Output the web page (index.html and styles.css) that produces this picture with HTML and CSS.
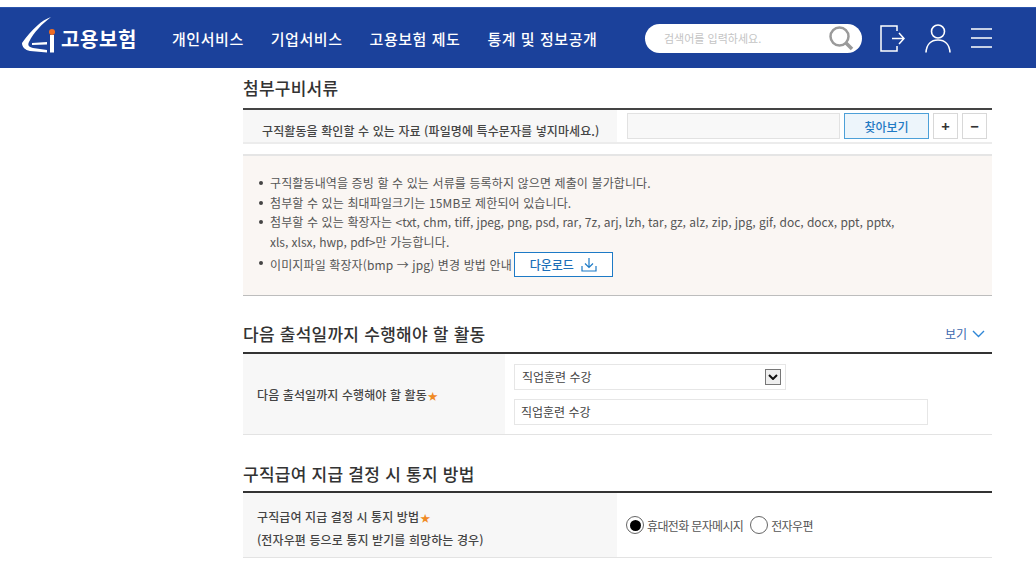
FILE: index.html
```html
<!DOCTYPE html>
<html lang="ko">
<head>
<meta charset="utf-8">
<title>고용보험</title>
<link rel="stylesheet" href="styles.css">
</head>
<body>
<header class="header">
  <a class="logo">
    <svg class="logo-mark" width="34" height="36" viewBox="0 0 34 36">
      <path d="M29 0C20 3 10 12 0 26C0 30 3 33 8 34L25 35.500V33L11 31C6.500 30 5.500 28 7 25C12 15 20 7 29 0Z" fill="#fff"/>
      <path d="M10 26L25 25V27.500L10 28Z" fill="#fff"/>
      <rect x="28" y="18" width="4" height="17.500" fill="#fff"/>
      <circle cx="30" cy="15" r="3" fill="#ee6c24"/>
    </svg>
    <span class="logo-text">고용보험</span>
  </a>
  <nav class="nav">
    <a>개인서비스</a>
    <a>기업서비스</a>
    <a>고용보험 제도</a>
    <a>통계 및 정보공개</a>
  </nav>
  <div class="search">
    <span class="search-hint">검색어를 입력하세요.</span>
    <svg width="28" height="28" viewBox="0 0 28 28" fill="none" stroke="#9a9a9a">
      <circle cx="12.500" cy="12.500" r="9" stroke-width="2.500"/>
      <path d="M19 19L25 25" stroke-width="3.500"/>
    </svg>
  </div>
  <div class="head-icons">
    <svg width="25" height="27" viewBox="0 0 25 27" fill="none" stroke="#fff" stroke-width="1.500">
      <path d="M17 6V1H1V26H17V21"/>
      <path d="M12 13.500H24M19 8L24 13.500L19 19"/>
    </svg>
    <svg width="26" height="29" viewBox="0 0 26 29" fill="none" stroke="#fff" stroke-width="1.600">
      <circle cx="13" cy="7.500" r="6.500"/>
      <path d="M1 28.500C1.500 20.500 6 16 13 16C20 16 24.500 20.500 25 28.500"/>
    </svg>
    <svg width="21" height="20" viewBox="0 0 21 20" fill="none" stroke="#fff" stroke-width="1.300">
      <path d="M0 1H21M0 10H21M0 19H21"/>
    </svg>
  </div>
</header>

<main class="main">
  <h2 class="sec-title first">첨부구비서류</h2>
  <div class="file-row">
    <div class="file-label">구직활동을 확인할 수 있는 자료 (파일명에 특수문자를 넣지마세요.)</div>
    <div class="file-controls">
      <div class="file-input"></div>
      <button class="btn-browse">찾아보기</button>
      <button class="btn-sq">+</button>
      <button class="btn-sq">−</button>
    </div>
  </div>
  <div class="notice">
    <ul>
      <li>구직활동내역을 증빙 할 수 있는 서류를 등록하지 않으면 제출이 불가합니다.</li>
      <li>첨부할 수 있는 최대파일크기는 15MB로 제한되어 있습니다.</li>
      <li>첨부할 수 있는 확장자는 <span class="ext">&lt;txt, chm, tiff, jpeg, png, psd, rar, 7z, arj, lzh, tar, gz, alz, zip, jpg, gif, doc, docx, ppt, pptx,</span><br><span class="ext">xls, xlsx, hwp, pdf&gt;</span>만 가능합니다.</li>
      <li class="dl-line"><span>이미지파일 확장자(bmp → jpg) 변경 방법 안내</span>
        <button class="btn-dl">다운로드
          <svg width="16" height="14" viewBox="0 0 16 14" fill="none" stroke="#1d7ac6" stroke-width="1.200">
            <path d="M8 0V9M4 5.500L8 9.500L12 5.500M1 8V13H15V8"/>
          </svg>
        </button>
      </li>
    </ul>
  </div>

  <div class="sec-head second">
    <h2 class="sec-title">다음 출석일까지 수행해야 할 활동</h2>
    <a class="more">보기
      <svg width="13" height="8" viewBox="0 0 13 8" fill="none" stroke="#2f86d6" stroke-width="1.400"><path d="M1 1L6.500 6.500L12 1"/></svg>
    </a>
  </div>
  <div class="row activity">
    <div class="label label-activity"><span>다음 출석일까지 수행해야 할 활동<i class="star">★</i></span></div>
    <div class="fields">
      <div class="select">직업훈련 수강
        <span class="select-btn"><svg width="10" height="6" viewBox="0 0 10 6" fill="none" stroke="#111" stroke-width="2"><path d="M1 1L5 5L9 1"/></svg></span>
      </div>
      <div class="text-input">직업훈련 수강</div>
    </div>
  </div>

  <div class="sec-head third">
    <h2 class="sec-title">구직급여 지급 결정 시 통지 방법</h2>
  </div>
  <div class="row method">
    <div class="label label-method">
      <div>구직급여 지급 결정 시 통지 방법<i class="star">★</i></div>
      <div>(전자우편 등으로 통지 받기를 희망하는 경우)</div>
    </div>
    <div class="radios">
      <span class="radio on"></span><span class="radio-text first-opt">휴대전화 문자메시지</span>
      <span class="radio"></span><span class="radio-text">전자우편</span>
    </div>
  </div>
</main>
</body>
</html>
```
FILE: styles.css
```css
* { box-sizing: border-box; }
html, body { margin: 0; padding: 0; }
body {
  background: #fff;
  font-family: "Noto Sans CJK KR", "Noto Sans", sans-serif;
  color: #444;
  overflow: hidden;
  height: 584px;
}
.header {
  margin-top: 7px;
  height: 61px;
  background: #1b419b;
  display: flex;
  align-items: center;
  color: #fff;
  border-top: 1px solid #2a55ad;
}
.logo { display: flex; align-items: center; margin-left: 22px; width: 150px; }
.logo-mark { margin-top: -6px; }
.logo-text { font-size: 20px; font-weight: 700; margin-left: 5px; letter-spacing: 0.600px; }
.nav { display: flex; gap: 27px; font-size: 15px; font-weight: 500; width: 473px; letter-spacing: 0.550px; }
.search {
  width: 217px;
  height: 29px;
  background: #fff;
  border-radius: 15px;
  display: flex;
  align-items: center;
  justify-content: space-between;
  padding: 0 7px 0 19px;
}
.search-hint { font-size: 11px; color: #c4c4c4; }
.head-icons { display: flex; align-items: center; gap: 20px; margin-left: 18px; }
.main { margin-left: 243px; width: 749px; }
.sec-title { margin: 0; font-size: 17px; font-weight: 500; color: #333; line-height: 24px; letter-spacing: 0.250px; }
.sec-title.first { padding-top: 8px; height: 40px; }
.file-row {
  display: flex;
  height: 36px;
  border-top: 2px solid #444;
  border-bottom: 2px solid #ececec;
  background: #fff;
}
.file-label {
  width: 374px;
  background: #f7f7f7;
  font-size: 12px;
  font-weight: 500;
  padding: 12px 0 0 19px;
  line-height: 18px;
  white-space: nowrap;
  letter-spacing: 0.100px;
}
.file-controls { display: flex; gap: 4px; padding: 3px 0 0 10px; align-items: flex-start; }
.file-input { width: 213px; height: 26px; background: #f8f8f8; border: 1px solid #e2e2e2; }
.btn-browse {
  width: 85px; height: 26px; padding: 0;
  background: #edf5fb; border: 1px solid #4da0d8; color: #1f7ac4;
  font: 500 12px "Noto Sans CJK KR", sans-serif;
}
.btn-sq {
  width: 25px; height: 26px; padding: 0;
  background: #fff; border: 1px solid #d8d8d8; color: #333;
  font: 700 15px "Noto Sans", sans-serif;
}
.notice {
  margin-top: 10px;
  height: 142px;
  background: #faf6f3;
  border-top: 2px solid #e5e5e5;
  border-bottom: 1px solid #bdbdbd;
  padding: 17px 0 0 16px;
  font-size: 12px;
  color: #555;
  letter-spacing: 0.120px;
}
.notice ul { margin: 0; padding: 0; list-style: none; }
.notice li { line-height: 19.670px; padding-left: 11px; position: relative; white-space: nowrap; }
.ext { letter-spacing: -0.020px; }
.notice li::before {
  content: "";
  position: absolute;
  left: 0; top: 8px;
  width: 4px; height: 4px;
  border-radius: 50%;
  background: #444;
}
.dl-line { display: flex; align-items: center; gap: 2px; height: 26px; }
.notice li.dl-line::before { top: 9px; }
.btn-dl {
  width: 99px; height: 25px; padding: 0;
  background: #fff; border: 1px solid #1d7ac6; color: #1d6fb8;
  font: 500 12px "Noto Sans CJK KR", sans-serif;
  display: flex; align-items: center; justify-content: center; gap: 7px;
}
.sec-head {
  display: flex;
  justify-content: space-between;
  align-items: flex-start;
  border-bottom: 2px solid #333;
}
.sec-head.second { margin-top: 26px; height: 32px; }
.sec-head.third { margin-top: 27px; height: 31px; }
.more {
  display: flex; align-items: center; gap: 5px;
  font-size: 12px; color: #3c68ad; margin: 3px 7px 0 0;
}
.row { display: flex; border-bottom: 1px solid #e3e3e3; }
.activity { height: 81px; }
.method { height: 65px; }
.label {
  background: #f7f7f7;
  font-size: 12px;
  font-weight: 500;
  color: #444;
  padding-left: 14px;
  letter-spacing: 0.100px;
}
.label-activity { width: 262px; display: flex; align-items: center; }
.label-method { width: 374px; padding-top: 13px; line-height: 22px; }
.star { font-style: normal; color: #f08a24; font-size: 10px; margin-left: 1px; }
.fields { padding: 10px 0 0 9px; display: flex; flex-direction: column; gap: 9px; }
.select {
  width: 272px; height: 26px;
  border: 1px solid #e6e6e6;
  font-size: 12px; line-height: 24px; padding-left: 7px;
  display: flex; justify-content: space-between; align-items: center;
  padding-right: 4px;
}
.select-btn {
  width: 16px; height: 16px;
  background: #eee; border: 1px solid #777;
  display: flex; align-items: center; justify-content: center;
}
.text-input {
  width: 414px; height: 26px;
  border: 1px solid #e6e6e6;
  font-size: 12px; line-height: 24px; padding-left: 6px;
}
.radios { display: flex; align-items: center; padding-left: 9px; font-size: 12px; color: #555; height: 64px; }
.radio {
  width: 18px; height: 18px;
  border: 1px solid #666;
  border-radius: 50%;
  display: flex;
  align-items: center;
  justify-content: center;
  background: #fff;
}
.radio.on::after { content: ""; width: 11px; height: 11px; border-radius: 50%; background: #000; }
.radio-text { margin-left: 3px; letter-spacing: -0.650px; }
.first-opt { margin-right: 7px; }
```
